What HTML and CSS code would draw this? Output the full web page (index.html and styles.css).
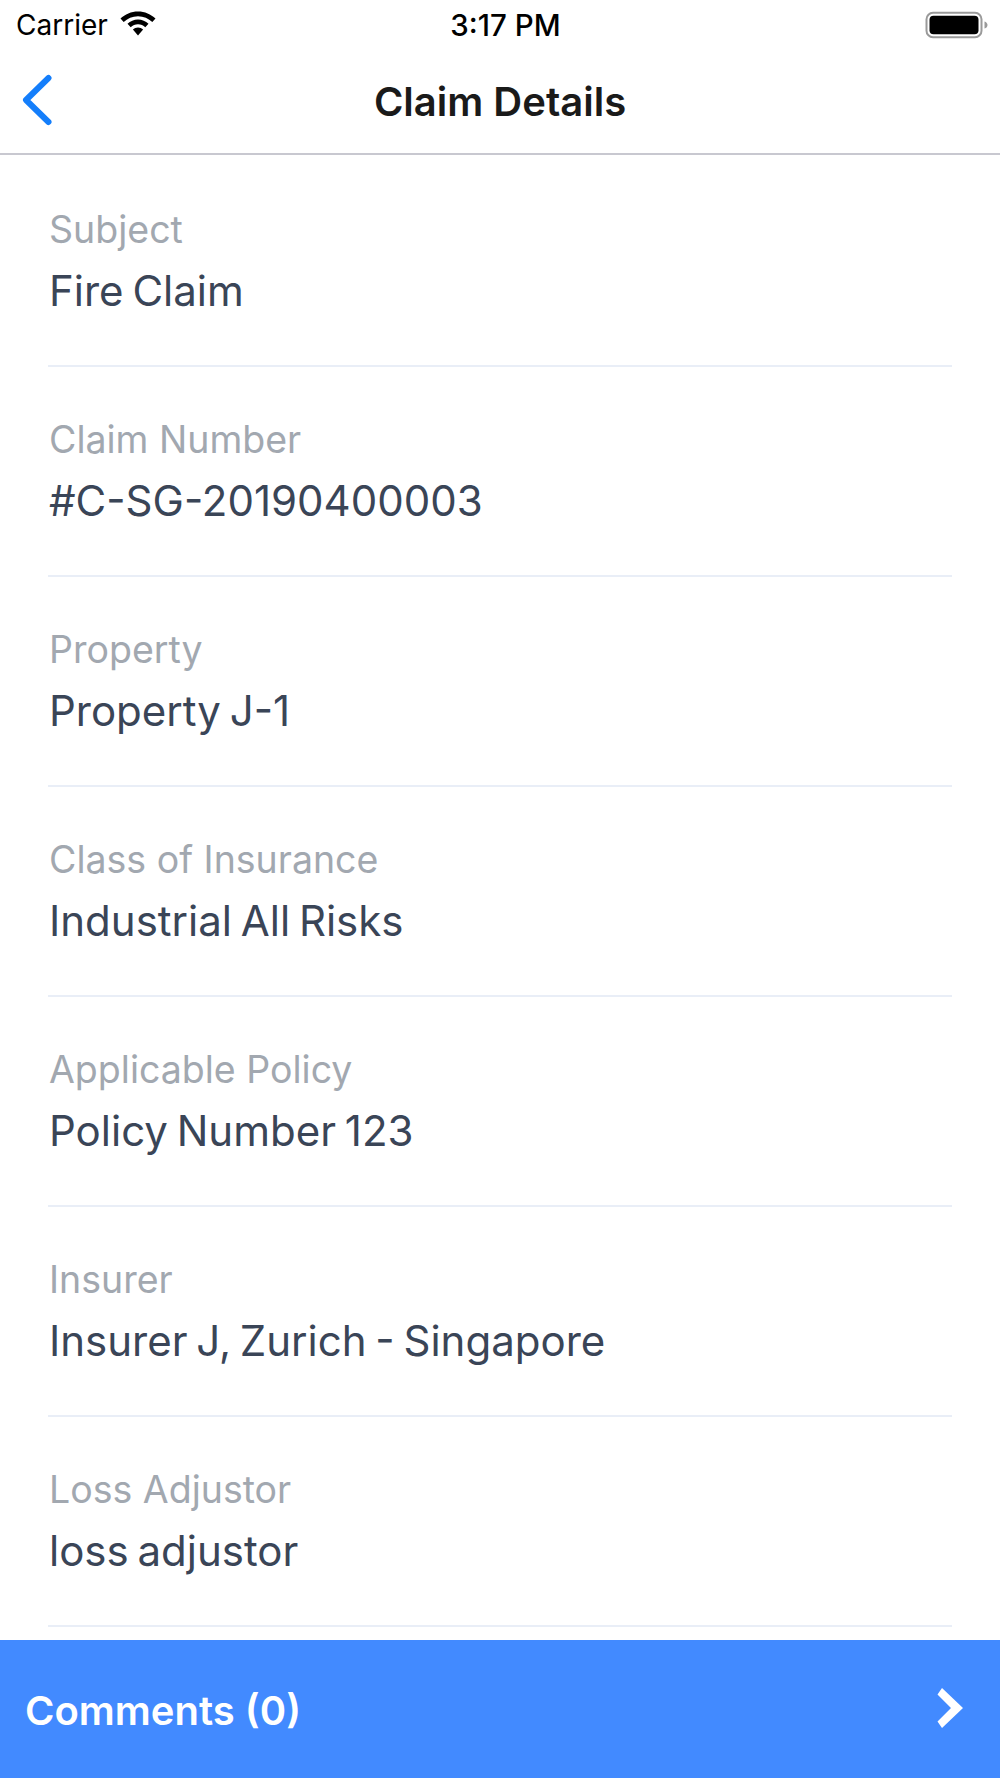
FILE: index.html
```html
<!DOCTYPE html>
<html lang="en">
<head>
<meta charset="utf-8">
<title>Claim Details</title>
<link rel="stylesheet" href="styles.css">
</head>
<body>
<div class="screen">
  <header class="top">
    <div class="status">
      <div class="status-left">
        <span>Carrier</span>
        <svg class="wifi" viewBox="0 0 36 26" width="36" height="26"><path d="M18 1.500C11.200 1.500 5 4.200.5 8.600L3.700 12C7.400 8.400 12.400 6.200 18 6.200S28.600 8.400 32.300 12L35.500 8.600C31 4.200 24.800 1.500 18 1.500Z"/><path d="M18 9.600C14 9.600 10.300 11.200 7.500 13.800L10.700 17.200C12.600 15.400 15.200 14.300 18 14.300S23.400 15.400 25.300 17.200L28.500 13.800C25.700 11.200 22 9.600 18 9.600Z"/><path d="M18 17.600C16 17.600 14.200 18.400 12.900 19.600L18 25.500L23.100 19.600C21.800 18.400 20 17.600 18 17.600Z"/></svg>
      </div>
      <div class="clock">3:17 PM</div>
      <svg class="battery" viewBox="0 0 64 28" width="64" height="28">
        <rect x="1.500" y="1.800" width="55" height="24.400" rx="6.500" fill="none" stroke="#9a9a9a" stroke-width="2"/>
        <rect x="4.500" y="4.800" width="49" height="18.400" rx="4" fill="#000"/>
        <path d="M59.500 10.500C61.500 11 62.500 12.500 62.500 14S61.500 17 59.500 17.500Z" fill="#9a9a9a"/>
      </svg>
    </div>
    <nav class="nav">
      <svg class="back" viewBox="0 0 32 52" width="32" height="52"><path d="M27.500 4 5 26 27.500 48" fill="none" stroke="#147efb" stroke-width="6" stroke-linecap="round" stroke-linejoin="round"/></svg>
      <h1 class="title">Claim Details</h1>
    </nav>
  </header>
  <main class="list">
    <section class="row"><div class="label">Subject</div><div class="value">Fire Claim</div></section>
    <section class="row"><div class="label">Claim Number</div><div class="value">#C-SG-20190400003</div></section>
    <section class="row"><div class="label">Property</div><div class="value">Property J-1</div></section>
    <section class="row"><div class="label">Class of Insurance</div><div class="value">Industrial All Risks</div></section>
    <section class="row"><div class="label">Applicable Policy</div><div class="value">Policy Number 123</div></section>
    <section class="row"><div class="label">Insurer</div><div class="value">Insurer J, Zurich - Singapore</div></section>
    <section class="row"><div class="label">Loss Adjustor</div><div class="value">loss adjustor</div></section>
  </main>
  <footer class="comments">
    <span class="comments-text">Comments (0)</span>
    <svg class="chev" viewBox="0 0 28 42" width="28" height="42"><path d="M6 1 1.500 7.500 15 21 1.500 34.500 6 41 27 21Z" fill="#fff"/></svg>
  </footer>
</div>
</body>
</html>
```
FILE: styles.css
```css
* { box-sizing: border-box; }
html, body { margin: 0; padding: 0; background: #fff; }
.screen {
  width: 1000px;
  height: 1778px;
  display: flex;
  flex-direction: column;
  font-family: Inter, "Liberation Sans", sans-serif;
  overflow: hidden;
  background: #fff;
}
.top {
  height: 155px;
  flex: none;
  border-bottom: 2px solid #c8c8d0;
}
.status {
  height: 50px;
  padding: 0 11px 0 16px;
  display: flex;
  align-items: center;
  justify-content: space-between;
  position: relative;
  color: #000;
  font-size: 28px;
}
.status-left { display: flex; align-items: center; gap: 12px; }
.wifi { fill: #000; margin-top: -4px; }
.clock {
  position: absolute;
  left: 11px;
  right: 0;
  top: 7px;
  text-align: center;
  font-size: 29.500px;
  font-weight: 500;
}
.battery { display: block; }
.nav {
  height: 103px;
  position: relative;
  display: flex;
  align-items: center;
  justify-content: center;
}
.back { position: absolute; left: 21px; top: 24px; }
.title {
  margin: 0;
  font-size: 40px;
  font-weight: 600;
  color: #1a1a1a;
}
.list {
  flex: 1;
  padding: 2px 48px 0;
}
.row {
  height: 210px;
  padding: 51px 0 0 1px;
  border-bottom: 2px solid #e9eef7;
}
.label {
  font-size: 37.500px;
  line-height: 44px;
  color: #a2a8b0;
}
.value {
  font-size: 42px;
  line-height: 50px;
  margin-top: 14px;
  color: #3a4557;
  word-spacing: -3px;
}
.comments {
  height: 138px;
  flex: none;
  background: #428aff;
  padding: 0 36px 0 25px;
  display: flex;
  align-items: center;
  justify-content: space-between;
}
.comments-text {
  color: #fff;
  font-size: 40px;
  font-weight: 600;
  padding-top: 2px;
}
.chev { margin-top: -2px; }
```
